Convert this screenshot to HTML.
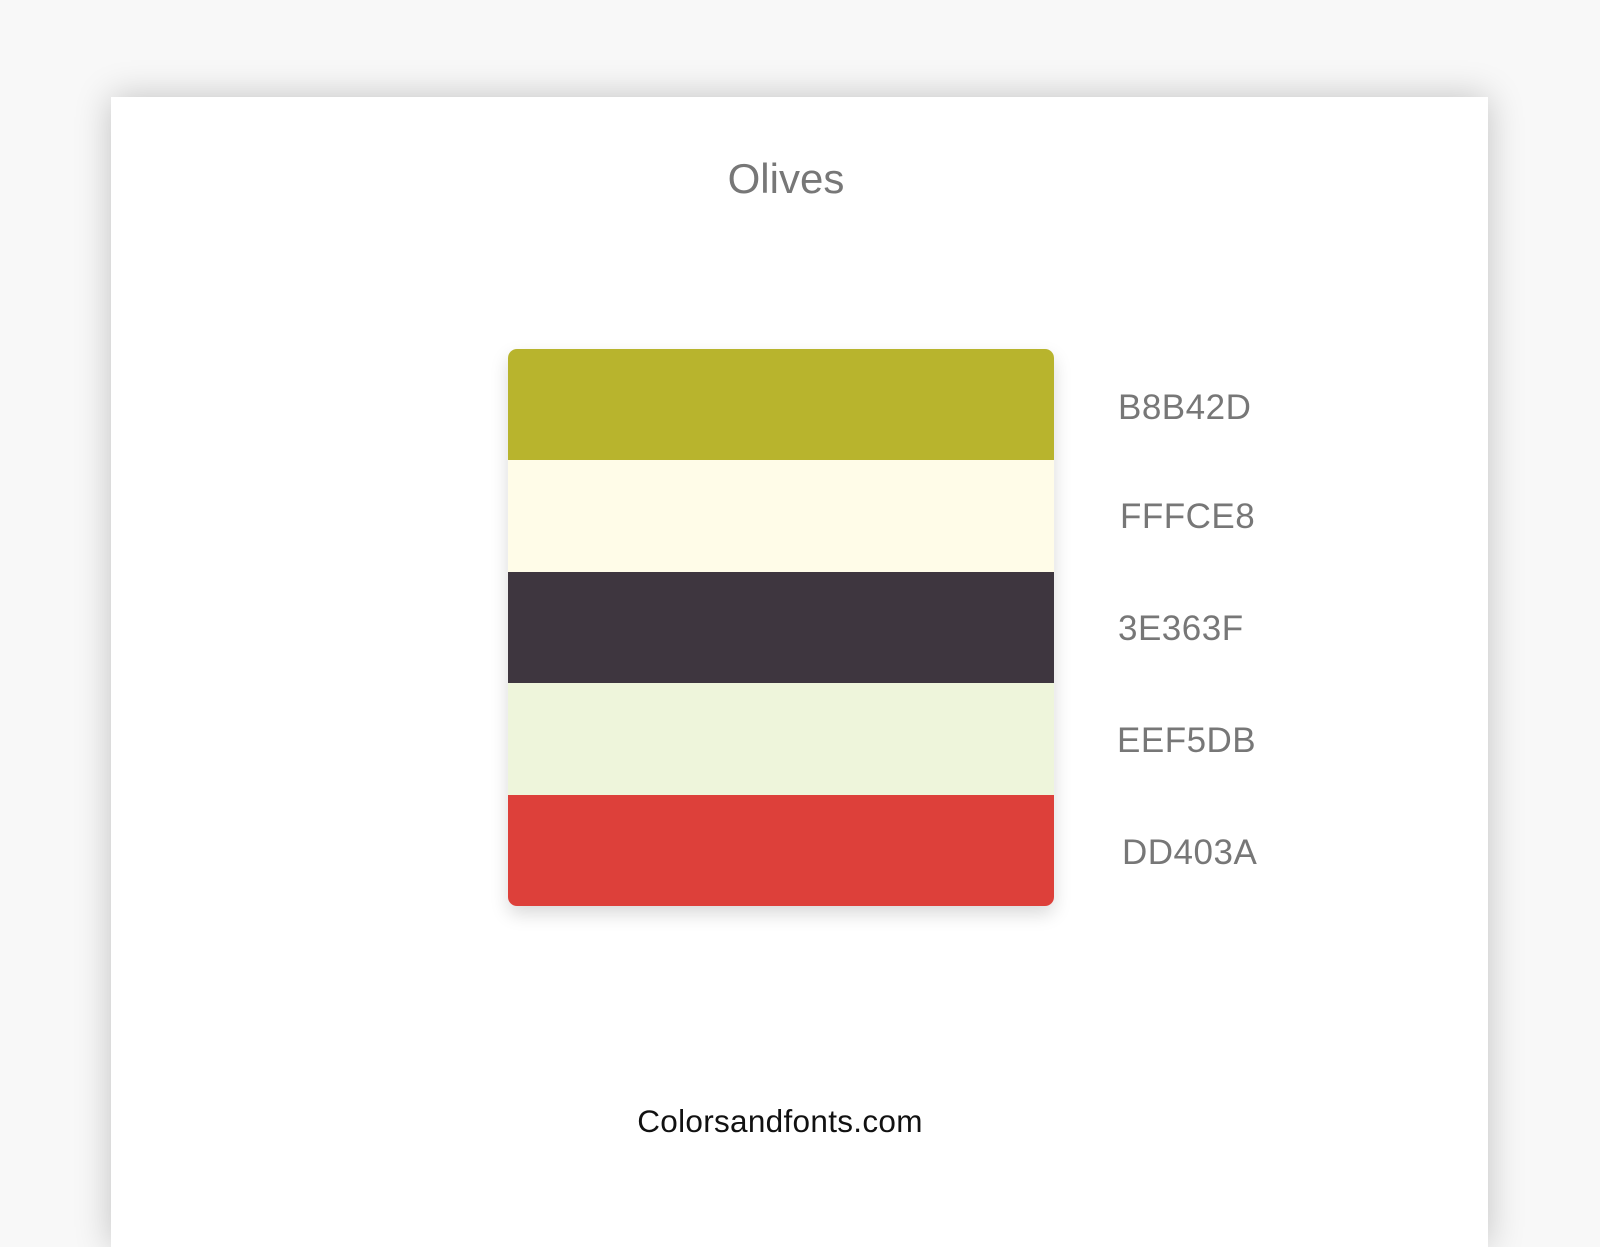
<!DOCTYPE html>
<html><head><style>
html,body{margin:0;padding:0;width:1600px;height:1200px;overflow:hidden;background:#f8f8f8;font-family:"Liberation Sans",sans-serif;}
.card{position:absolute;left:111px;top:97px;width:1377px;height:1150px;background:#fff;box-shadow:0 0 34px rgba(0,0,0,0.22);}
.title{position:absolute;left:0;width:100%;top:155px;text-align:center;font-size:42px;color:#777;}
.sw{position:absolute;left:508px;top:349px;width:546px;height:557px;border-radius:9px;overflow:hidden;box-shadow:0 8px 18px rgba(0,0,0,0.15);}
.sw div{height:111.4px;}
.lbl{position:absolute;font-size:35px;color:#777;letter-spacing:0.5px;}
.foot{position:absolute;left:0;width:100%;top:1103px;text-align:center;font-size:31.5px;color:#111;letter-spacing:0.3px;}
</style></head><body>
<div class="card"></div>
<div class="title" style="left:-14px">Olives</div>
<div class="sw">
<div style="background:#B8B42D"></div>
<div style="background:#FFFCE8"></div>
<div style="background:#3E363F"></div>
<div style="background:#EEF5DB"></div>
<div style="background:#DD403A"></div>
</div>
<div class="lbl" style="left:1118px;top:388px">B8B42D</div>
<div class="lbl" style="left:1120px;top:497px">FFFCE8</div>
<div class="lbl" style="left:1118px;top:609px">3E363F</div>
<div class="lbl" style="left:1117px;top:721px">EEF5DB</div>
<div class="lbl" style="left:1122px;top:833px">DD403A</div>
<div class="foot" style="left:-20px">Colorsandfonts.com</div>
</body></html>
